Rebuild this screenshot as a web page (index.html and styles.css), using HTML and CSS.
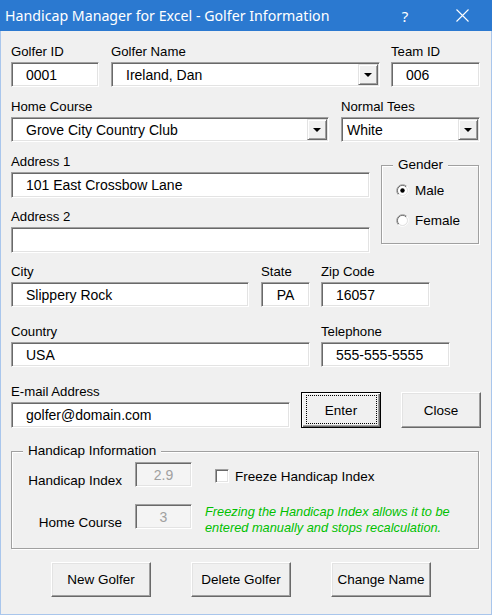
FILE: index.html
```html
<!DOCTYPE html>
<html>
<head>
<meta charset="utf-8">
<title>Golfer Information</title>
<link rel="stylesheet" href="styles.css">
</head>
<body>
<div class="window">
  <div class="titlebar">
    <span class="title">Handicap Manager for Excel - Golfer Information</span>
    <span class="tb-help">?</span>
    <span class="tb-close"><svg width="13" height="13" viewBox="0 0 13 13"><path d="M0.5 0.5 L12.5 12.5 M12.5 0.5 L0.5 12.5" stroke="#fff" stroke-width="1.1" fill="none"/></svg></span>
  </div>
  <div class="main">
    <div class="row">
      <div class="field w-id"><div class="lbl">Golfer ID</div><div class="box">0001</div></div>
      <div class="field w-name ml12"><div class="lbl">Golfer Name</div>
        <div class="box combo"><span class="val">Ireland, Dan</span><span class="drop"><svg width="8" height="4" viewBox="0 0 8 4"><path d="M0 0 H8 L4 4 Z" fill="#000"/></svg></span></div>
      </div>
      <div class="field w-team ml11"><div class="lbl">Team ID</div><div class="box">006</div></div>
    </div>

    <div class="row mt12">
      <div class="field w-course"><div class="lbl">Home Course</div>
        <div class="box combo"><span class="val">Grove City Country Club</span><span class="drop"><svg width="8" height="4" viewBox="0 0 8 4"><path d="M0 0 H8 L4 4 Z" fill="#000"/></svg></span></div>
      </div>
      <div class="field w-tees ml12"><div class="lbl">Normal Tees</div>
        <div class="box combo tight"><span class="val">White</span><span class="drop"><svg width="8" height="4" viewBox="0 0 8 4"><path d="M0 0 H8 L4 4 Z" fill="#000"/></svg></span></div>
      </div>
    </div>

    <div class="row">
      <div class="addr-col">
        <div class="field mt12"><div class="lbl">Address 1</div><div class="box h26">101 East Crossbow Lane</div></div>
        <div class="field mt11"><div class="lbl">Address 2</div><div class="box h26"></div></div>
      </div>
      <div class="frame gender">
        <div class="legend">Gender</div>
        <div class="opt first"><svg class="radio" width="13" height="13" viewBox="0 0 13 13">
            <path d="M2.26 10.74 A6 6 0 0 1 10.74 2.26" stroke="#a0a0a0" fill="none"/>
            <path d="M10.74 2.26 A6 6 0 0 1 2.26 10.74" stroke="#ffffff" fill="none"/>
            <path d="M2.96 10.04 A5 5 0 0 1 10.04 2.96" stroke="#696969" fill="none"/>
            <path d="M10.04 2.96 A5 5 0 0 1 2.96 10.04" stroke="#e3e3e3" fill="none"/>
            <circle cx="6.5" cy="6.5" r="4.4" fill="#fff"/>
            <circle cx="6.5" cy="6.5" r="2.2" fill="#000"/>
          </svg><span>Male</span></div>
        <div class="opt second"><svg class="radio" width="13" height="13" viewBox="0 0 13 13">
            <path d="M2.26 10.74 A6 6 0 0 1 10.74 2.26" stroke="#a0a0a0" fill="none"/>
            <path d="M10.74 2.26 A6 6 0 0 1 2.26 10.74" stroke="#ffffff" fill="none"/>
            <path d="M2.96 10.04 A5 5 0 0 1 10.04 2.96" stroke="#696969" fill="none"/>
            <path d="M10.04 2.96 A5 5 0 0 1 2.96 10.04" stroke="#e3e3e3" fill="none"/>
            <circle cx="6.5" cy="6.5" r="4.4" fill="#fff"/>
          </svg><span>Female</span></div>
      </div>
    </div>

    <div class="row mt11">
      <div class="field w-city"><div class="lbl">City</div><div class="box">Slippery Rock</div></div>
      <div class="field w-state ml12"><div class="lbl">State</div><div class="box center">PA</div></div>
      <div class="field w-zip ml11"><div class="lbl">Zip Code</div><div class="box">16057</div></div>
    </div>

    <div class="row mt17">
      <div class="field w-country"><div class="lbl">Country</div><div class="box">USA</div></div>
      <div class="field w-phone ml11"><div class="lbl">Telephone</div><div class="box">555-555-5555</div></div>
    </div>

    <div class="row mt17 bottom">
      <div class="field w-email"><div class="lbl">E-mail Address</div><div class="box h26">golfer@domain.com</div></div>
      <button class="btn default ml11">Enter</button>
      <button class="btn ml20">Close</button>
    </div>

    <div class="frame hcap">
      <div class="legend">Handicap Information</div>
      <div class="hgrid">
        <div class="hlbl">Handicap Index</div>
        <div class="box dis">2.9</div>
        <div class="chk-row"><span class="chk"></span><span>Freeze Handicap Index</span></div>
        <div class="hlbl">Home Course</div>
        <div class="box dis">3</div>
        <div class="note">Freezing the Handicap Index allows it to be<br>entered manually and stops recalculation.</div>
      </div>
    </div>

    <div class="actions">
      <button class="btn big">New Golfer</button>
      <button class="btn big">Delete Golfer</button>
      <button class="btn big">Change Name</button>
    </div>
  </div>
</div>
</body>
</html>
```

FILE: styles.css
```css
* { box-sizing: border-box; }
html, body { margin: 0; padding: 0; }
body {
  width: 492px;
  height: 615px;
  overflow: hidden;
  background: #f0f0f0;
  font-family: "Liberation Sans", Arial, sans-serif;
  font-size: 13.2px;
  color: #000;
}
.window {
  width: 492px;
  height: 615px;
  display: flex;
  flex-direction: column;
  background: #f0f0f0;
}
.titlebar {
  height: 31px;
  flex: none;
  background: #2b79d0;
  color: #fff;
  display: flex;
  align-items: center;
  padding-left: 5px;
  font-family: "Noto Sans", sans-serif;
}
.title { flex: 1; font-size: 14.2px; white-space: nowrap; }
.tb-help { width: 20px; text-align: center; font-size: 15px; }
.tb-close { width: 20px; margin-left: 37px; margin-right: 20px; display: flex; justify-content: center; }

.main {
  flex: 1;
  border: 1px solid #a9c6ec;
  border-top: 0;
  padding: 13px 10px 0 10px;
}
.row { display: flex; }
.row.bottom { align-items: flex-end; }
.mt11 { margin-top: 11px; }
.mt12 { margin-top: 12px; }
.mt17 { margin-top: 17px; }
.ml11 { margin-left: 11px; }
.ml12 { margin-left: 12px; }
.ml20 { margin-left: 20px; }

.field { display: flex; flex-direction: column; }
.lbl { height: 16px; line-height: 16px; margin-bottom: 2px; white-space: nowrap; }

.w-id { width: 88px; }
.w-name { width: 269px; }
.w-team { width: 89px; }
.w-course { width: 318px; }
.w-tees { width: 139px; }
.addr-col { width: 359px; display: flex; flex-direction: column; }
.w-city { width: 238px; }
.w-state { width: 49px; }
.w-zip { width: 109px; }
.w-country { width: 299px; }
.w-phone { width: 129px; }
.w-email { width: 279px; }

.box {
  height: 25px;
  background: #fff;
  border: 1px solid;
  border-color: #a0a0a0 #ffffff #ffffff #a0a0a0;
  box-shadow: inset 1px 1px 0 #696969, inset -1px -1px 0 #e3e3e3;
  display: flex;
  align-items: center;
  padding-left: 14px;
  font-size: 14px;
  white-space: nowrap;
}
.box.h26 { height: 26px; }
.box.center { justify-content: center; padding-left: 0; }
.box.tight { padding-left: 5px; }
.combo .val { flex: 1; }
.drop {
  width: 20px;
  height: 21px;
  margin-right: 1px;
  background: #f0f0f0;
  border: 1px solid;
  border-color: #e3e3e3 #696969 #696969 #e3e3e3;
  box-shadow: inset 1px 1px 0 #ffffff, inset -1px -1px 0 #a0a0a0;
  display: flex;
  align-items: center;
  justify-content: center;
}

.frame {
  border: 1px solid #a0a0a0;
  box-shadow: 1px 1px 0 #ffffff, inset 1px 1px 0 #ffffff;
}
.legend {
  align-self: flex-start;
  width: max-content;
  margin: -9px 0 0 11px;
  padding: 0 5px;
  height: 16px;
  line-height: 16px;
  background: #f0f0f0;
  font-size: 13.5px;
}
.gender {
  width: 98px;
  height: 79px;
  margin: 23px 0 0 11px;
}
.opt { display: flex; align-items: center; height: 13px; margin-left: 14px; font-size: 13.5px; }
.opt.first { margin-top: 11px; }
.opt.second { margin-top: 17px; }
.radio { margin-right: 6px; flex: none; }

.btn {
  width: 80px;
  height: 36px;
  padding: 0;
  background: #f0f0f0;
  border: 1px solid;
  border-color: #ffffff #696969 #696969 #ffffff;
  box-shadow: inset -1px -1px 0 #a0a0a0, inset 1px 1px 0 #e3e3e3;
  font-family: "Liberation Sans", Arial, sans-serif;
  font-size: 13.5px;
  color: #000;
  display: flex;
  align-items: center;
  justify-content: center;
}
.btn.default {
  position: relative;
  border-color: #000;
  box-shadow: inset 1px 1px 0 #ffffff, inset -1px -1px 0 #696969, inset -2px -2px 0 #a0a0a0;
}
.btn.default::after {
  content: "";
  position: absolute;
  top: 2px; left: 4px; right: 3px; bottom: 3px;
  border: 1px dotted #000;
}

.hcap {
  width: 468px;
  height: 98px;
  margin-top: 23px;
}
.hgrid {
  display: grid;
  grid-template-columns: 110px 57px auto;
  column-gap: 13px;
  row-gap: 15px;
  margin-top: 3px;
  align-items: start;
}
.hlbl { text-align: right; margin-top: 11px; line-height: 16px; font-size: 13.5px; white-space: nowrap; }
.box.dis { background: #f4f4f4; color: #a0a0a0; justify-content: center; padding-left: 0; }
.chk-row { display: flex; align-items: center; margin: 7px 0 0 10px; height: 14px; font-size: 13.5px; }
.chk {
  width: 14px;
  height: 14px;
  margin-right: 6px;
  background: #fff;
  border: 1px solid;
  border-color: #a0a0a0 #ffffff #ffffff #a0a0a0;
  box-shadow: inset 1px 1px 0 #696969, inset -1px -1px 0 #e3e3e3;
}
.note {
  font-style: italic;
  color: #00c000;
  line-height: 16px;
  font-size: 12.8px;
  white-space: nowrap;
}

.actions {
  display: flex;
  gap: 40px;
  margin: 13px 0 0 40px;
}
.btn.big { width: 100px; height: 35px; }
```
